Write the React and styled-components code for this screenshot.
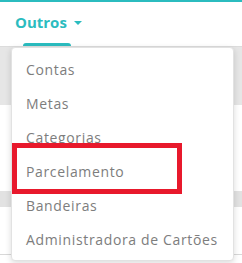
import React from 'react'
import styled, { createGlobalStyle } from 'styled-components'

const teal = '#2bbcbf'

const GlobalStyle = createGlobalStyle`
  html, body {
    margin: 0;
    padding: 0;
    background: #fff;
    font-family: "Open Sans", "Liberation Sans", sans-serif;
  }
`

const Page = styled.div`
  position: relative;
  width: 242px;
  height: 263px;
  overflow: hidden;
  background: #fff;
`

const TopBar = styled.div`
  height: 44px;
  border-top: 2px solid ${teal};
  border-bottom: 1px solid #dcdcdc;
  display: flex;
  align-items: stretch;
  padding-left: 15px;
`

const NavItem = styled.div`
  display: flex;
  flex-direction: column;
  align-items: flex-start;
  justify-content: flex-end;
`

const NavLabel = styled.div`
  display: flex;
  align-items: center;
  gap: 7px;
  color: ${teal};
  font-weight: 700;
  font-size: 15px;
  line-height: 20px;
  margin-bottom: 11px;
`

const Caret = styled.span`
  width: 0;
  height: 0;
  border-left: 4px solid transparent;
  border-right: 4px solid transparent;
  border-top: 4px solid ${teal};
  margin-top: 2px;
`

const Indicator = styled.div`
  width: 48px;
  height: 3px;
  margin-left: 8px;
  background: ${teal};
  border-radius: 4px 4px 0 0;
`

const Band = styled.div`
  height: ${p => p.h}px;
  background: ${p => p.bg};
  border-bottom: ${p => (p.line ? '1px solid #d8d8d8' : 'none')};
`

const Menu = styled.div`
  position: absolute;
  left: 11px;
  top: 47px;
  width: 223px;
  background: #fff;
  border: 1px solid #e2e2e2;
  border-radius: 4px;
  box-shadow: 0 2px 6px rgba(0, 0, 0, 0.15);
  padding: 4px 0;
  box-sizing: border-box;
`

const MenuItem = styled.div`
  height: 34px;
  display: flex;
  align-items: center;
  padding-left: 14px;
  color: #7d7d7d;
  font-size: 14px;
  letter-spacing: 0.65px;
  white-space: nowrap;
`

const Highlight = styled.div`
  position: absolute;
  left: 12px;
  top: 143px;
  width: 170px;
  height: 51px;
  border: 5px solid #e8192c;
  box-sizing: border-box;
`

const items = [
  'Contas',
  'Metas',
  'Categorias',
  'Parcelamento',
  'Bandeiras',
  'Administradora de Cartões',
]

export default function App() {
  return (
    <Page>
      <GlobalStyle />
      <TopBar>
        <NavItem>
          <NavLabel>
            Outros
            <Caret />
          </NavLabel>
          <Indicator />
        </NavItem>
      </TopBar>
      <Band h={58} bg="#e6e6e6" />
      <Band h={86} bg="#fff" />
      <Band h={16} bg="#e2e2e2" />
      <Band h={47} bg="#fff" line />
      <Menu>
        {items.map(item => (
          <MenuItem key={item}>{item}</MenuItem>
        ))}
      </Menu>
      <Highlight />
    </Page>
  )
}
